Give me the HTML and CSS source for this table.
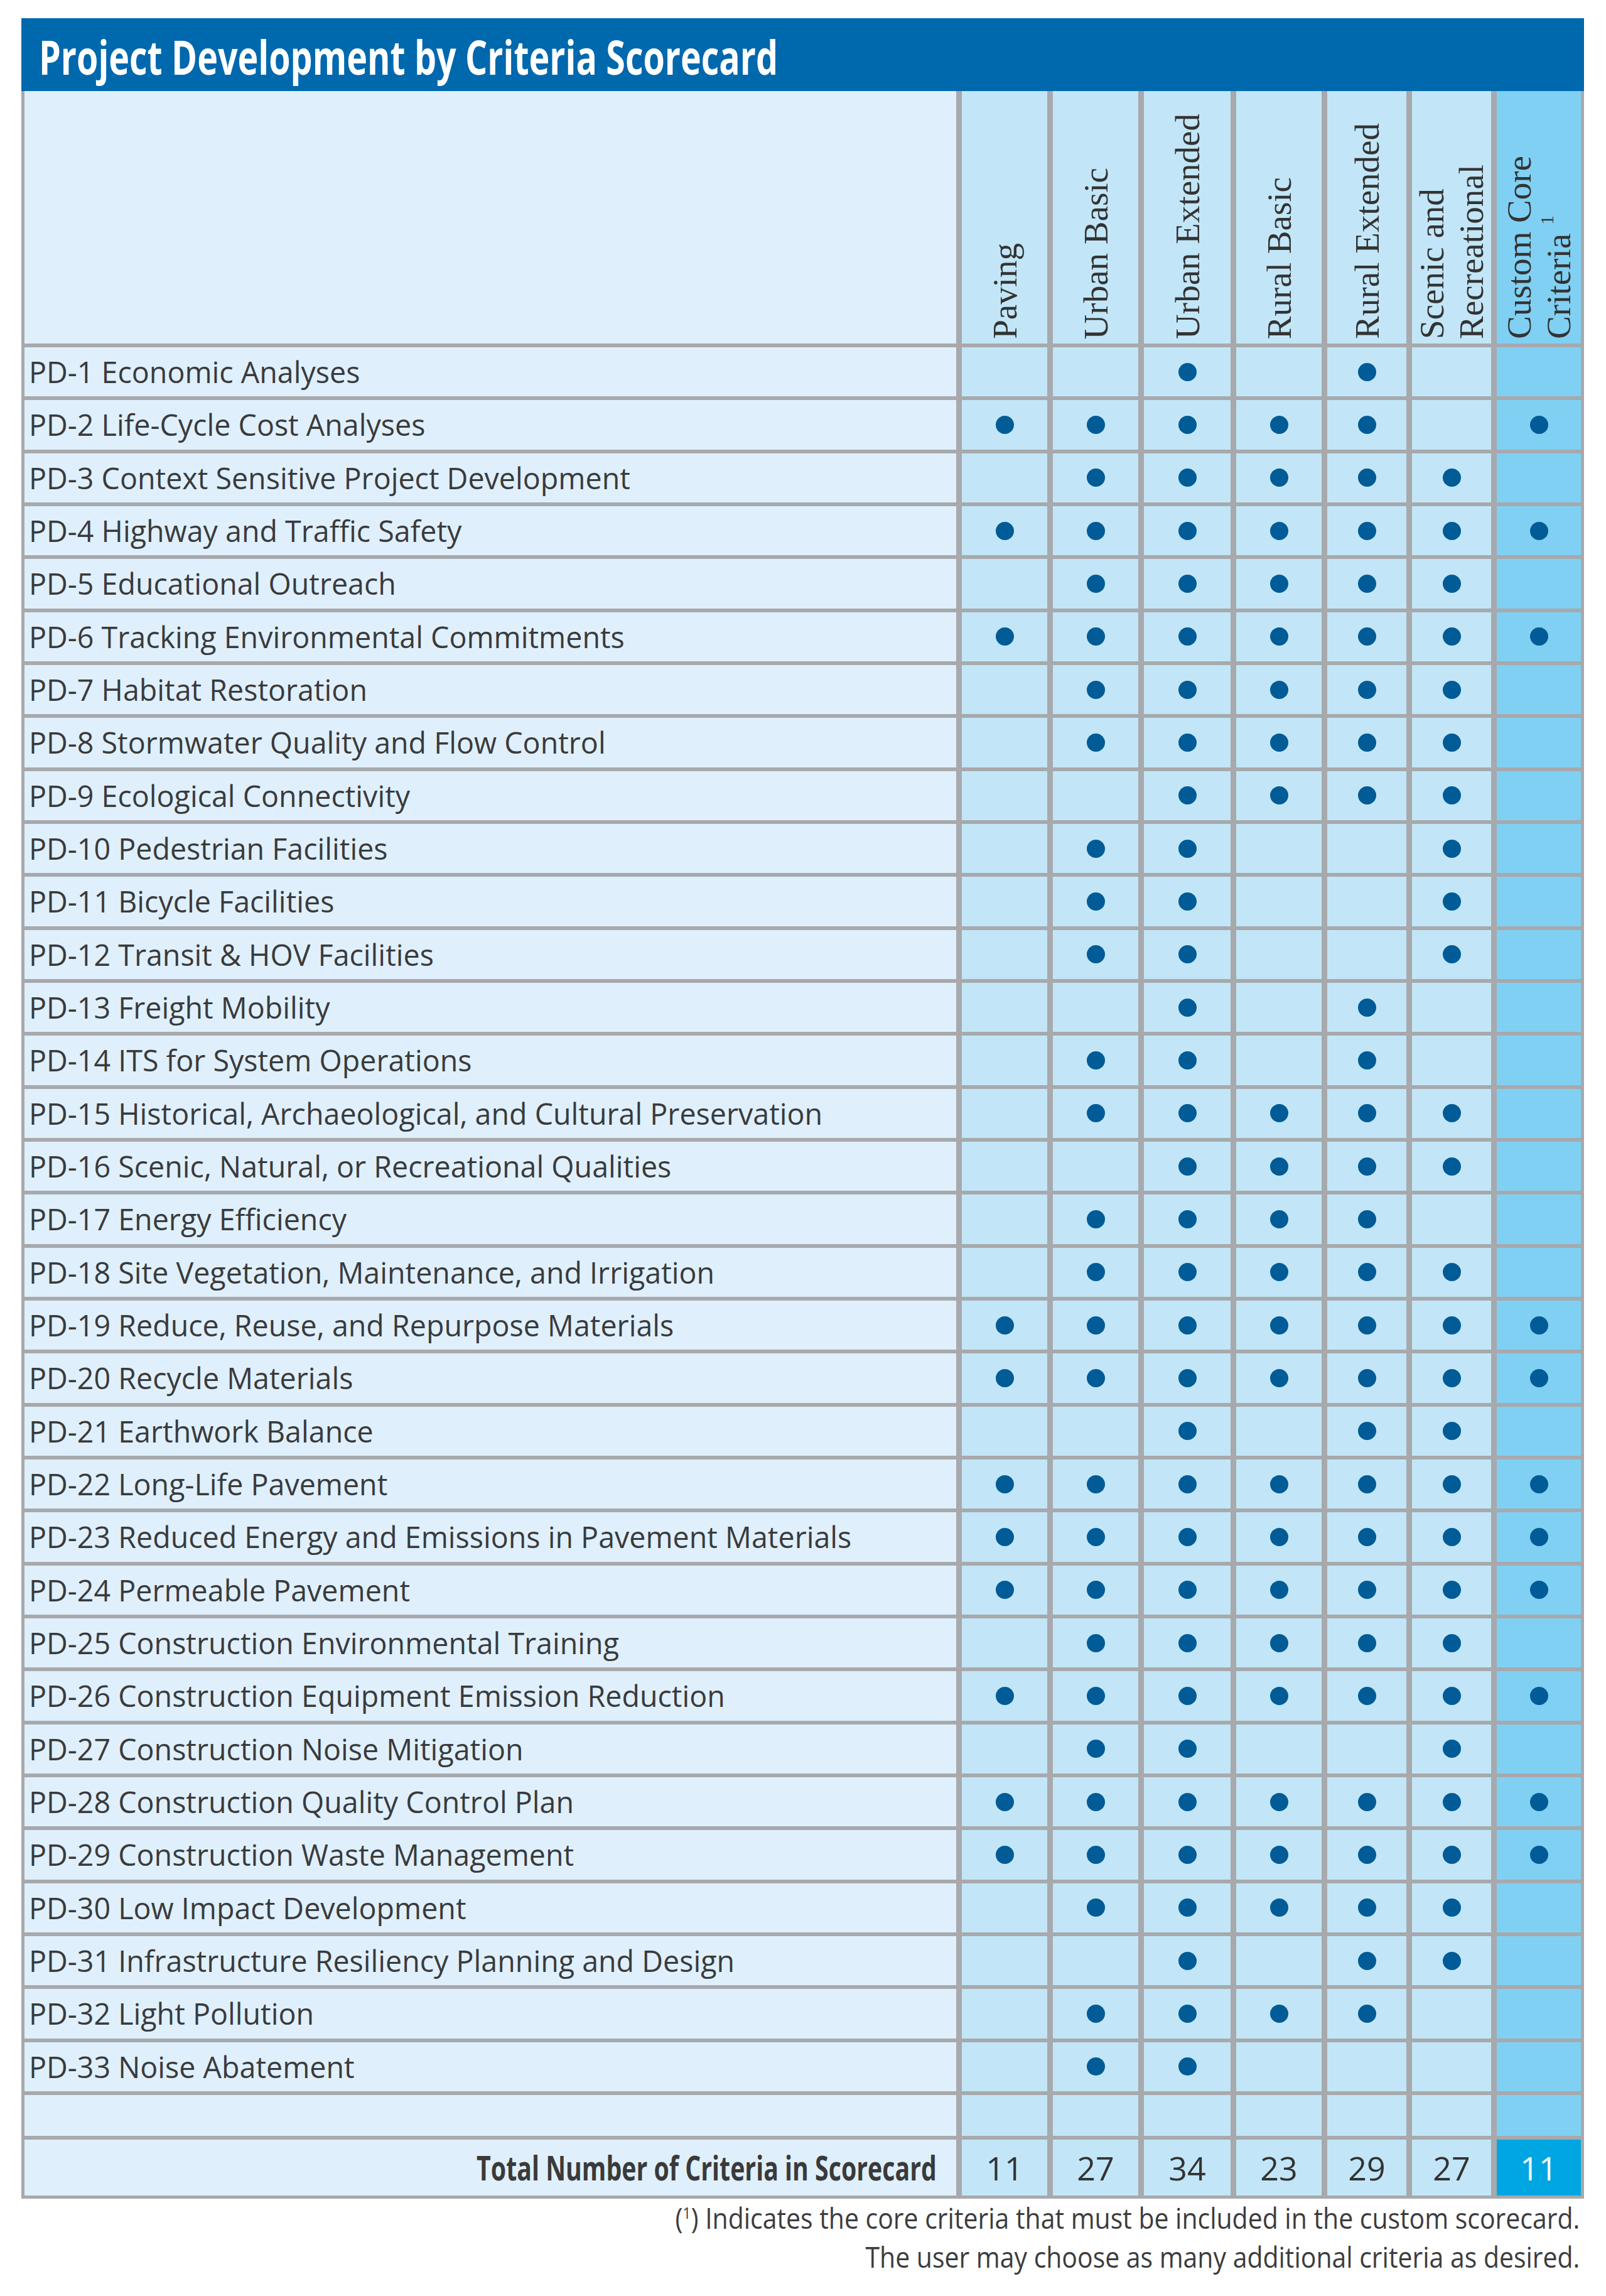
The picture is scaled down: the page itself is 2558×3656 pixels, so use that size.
FILE: index.html
```html
<!DOCTYPE html>
<html lang="en">
<head>
<meta charset="utf-8">
<title>Project Development by Criteria Scorecard</title>
<link rel="stylesheet" href="styles.css">
</head>
<body>
<div class="page">
  <div class="card">
    <div class="title"><span class="title-text">Project Development by Criteria Scorecard</span></div>
    <div class="grid">
      <div class="lbl"></div>
      <div class="c hc"><span class="vt">Paving</span></div>
      <div class="c hc"><span class="vt">Urban Basic</span></div>
      <div class="c hc"><span class="vt">Urban Extended</span></div>
      <div class="c hc"><span class="vt">Rural Basic</span></div>
      <div class="c hc"><span class="vt">Rural Extended</span></div>
      <div class="c hc"><span class="vt">Scenic and<br>Recreational</span></div>
      <div class="c core hc"><span class="vt">Custom Core<br>Criteria <sup class="sup">1</sup></span></div>

      <div class="lbl">PD-1 Economic Analyses</div>
      <div class="c"></div><div class="c"></div><div class="c"><span class="dot"></span></div><div class="c"></div><div class="c"><span class="dot"></span></div><div class="c"></div><div class="c core"></div>

      <div class="lbl">PD-2 Life-Cycle Cost Analyses</div>
      <div class="c"><span class="dot"></span></div><div class="c"><span class="dot"></span></div><div class="c"><span class="dot"></span></div><div class="c"><span class="dot"></span></div><div class="c"><span class="dot"></span></div><div class="c"></div><div class="c core"><span class="dot"></span></div>

      <div class="lbl">PD-3 Context Sensitive Project Development</div>
      <div class="c"></div><div class="c"><span class="dot"></span></div><div class="c"><span class="dot"></span></div><div class="c"><span class="dot"></span></div><div class="c"><span class="dot"></span></div><div class="c"><span class="dot"></span></div><div class="c core"></div>

      <div class="lbl">PD-4 Highway and Traffic Safety</div>
      <div class="c"><span class="dot"></span></div><div class="c"><span class="dot"></span></div><div class="c"><span class="dot"></span></div><div class="c"><span class="dot"></span></div><div class="c"><span class="dot"></span></div><div class="c"><span class="dot"></span></div><div class="c core"><span class="dot"></span></div>

      <div class="lbl">PD-5 Educational Outreach</div>
      <div class="c"></div><div class="c"><span class="dot"></span></div><div class="c"><span class="dot"></span></div><div class="c"><span class="dot"></span></div><div class="c"><span class="dot"></span></div><div class="c"><span class="dot"></span></div><div class="c core"></div>

      <div class="lbl">PD-6 Tracking Environmental Commitments</div>
      <div class="c"><span class="dot"></span></div><div class="c"><span class="dot"></span></div><div class="c"><span class="dot"></span></div><div class="c"><span class="dot"></span></div><div class="c"><span class="dot"></span></div><div class="c"><span class="dot"></span></div><div class="c core"><span class="dot"></span></div>

      <div class="lbl">PD-7 Habitat Restoration</div>
      <div class="c"></div><div class="c"><span class="dot"></span></div><div class="c"><span class="dot"></span></div><div class="c"><span class="dot"></span></div><div class="c"><span class="dot"></span></div><div class="c"><span class="dot"></span></div><div class="c core"></div>

      <div class="lbl">PD-8 Stormwater Quality and Flow Control</div>
      <div class="c"></div><div class="c"><span class="dot"></span></div><div class="c"><span class="dot"></span></div><div class="c"><span class="dot"></span></div><div class="c"><span class="dot"></span></div><div class="c"><span class="dot"></span></div><div class="c core"></div>

      <div class="lbl">PD-9 Ecological Connectivity</div>
      <div class="c"></div><div class="c"></div><div class="c"><span class="dot"></span></div><div class="c"><span class="dot"></span></div><div class="c"><span class="dot"></span></div><div class="c"><span class="dot"></span></div><div class="c core"></div>

      <div class="lbl">PD-10 Pedestrian Facilities</div>
      <div class="c"></div><div class="c"><span class="dot"></span></div><div class="c"><span class="dot"></span></div><div class="c"></div><div class="c"></div><div class="c"><span class="dot"></span></div><div class="c core"></div>

      <div class="lbl">PD-11 Bicycle Facilities</div>
      <div class="c"></div><div class="c"><span class="dot"></span></div><div class="c"><span class="dot"></span></div><div class="c"></div><div class="c"></div><div class="c"><span class="dot"></span></div><div class="c core"></div>

      <div class="lbl">PD-12 Transit &amp; HOV Facilities</div>
      <div class="c"></div><div class="c"><span class="dot"></span></div><div class="c"><span class="dot"></span></div><div class="c"></div><div class="c"></div><div class="c"><span class="dot"></span></div><div class="c core"></div>

      <div class="lbl">PD-13 Freight Mobility</div>
      <div class="c"></div><div class="c"></div><div class="c"><span class="dot"></span></div><div class="c"></div><div class="c"><span class="dot"></span></div><div class="c"></div><div class="c core"></div>

      <div class="lbl">PD-14 ITS for System Operations</div>
      <div class="c"></div><div class="c"><span class="dot"></span></div><div class="c"><span class="dot"></span></div><div class="c"></div><div class="c"><span class="dot"></span></div><div class="c"></div><div class="c core"></div>

      <div class="lbl">PD-15 Historical, Archaeological, and Cultural Preservation</div>
      <div class="c"></div><div class="c"><span class="dot"></span></div><div class="c"><span class="dot"></span></div><div class="c"><span class="dot"></span></div><div class="c"><span class="dot"></span></div><div class="c"><span class="dot"></span></div><div class="c core"></div>

      <div class="lbl">PD-16 Scenic, Natural, or Recreational Qualities</div>
      <div class="c"></div><div class="c"></div><div class="c"><span class="dot"></span></div><div class="c"><span class="dot"></span></div><div class="c"><span class="dot"></span></div><div class="c"><span class="dot"></span></div><div class="c core"></div>

      <div class="lbl">PD-17 Energy Efficiency</div>
      <div class="c"></div><div class="c"><span class="dot"></span></div><div class="c"><span class="dot"></span></div><div class="c"><span class="dot"></span></div><div class="c"><span class="dot"></span></div><div class="c"></div><div class="c core"></div>

      <div class="lbl">PD-18 Site Vegetation, Maintenance, and Irrigation</div>
      <div class="c"></div><div class="c"><span class="dot"></span></div><div class="c"><span class="dot"></span></div><div class="c"><span class="dot"></span></div><div class="c"><span class="dot"></span></div><div class="c"><span class="dot"></span></div><div class="c core"></div>

      <div class="lbl">PD-19 Reduce, Reuse, and Repurpose Materials</div>
      <div class="c"><span class="dot"></span></div><div class="c"><span class="dot"></span></div><div class="c"><span class="dot"></span></div><div class="c"><span class="dot"></span></div><div class="c"><span class="dot"></span></div><div class="c"><span class="dot"></span></div><div class="c core"><span class="dot"></span></div>

      <div class="lbl">PD-20 Recycle Materials</div>
      <div class="c"><span class="dot"></span></div><div class="c"><span class="dot"></span></div><div class="c"><span class="dot"></span></div><div class="c"><span class="dot"></span></div><div class="c"><span class="dot"></span></div><div class="c"><span class="dot"></span></div><div class="c core"><span class="dot"></span></div>

      <div class="lbl">PD-21 Earthwork Balance</div>
      <div class="c"></div><div class="c"></div><div class="c"><span class="dot"></span></div><div class="c"></div><div class="c"><span class="dot"></span></div><div class="c"><span class="dot"></span></div><div class="c core"></div>

      <div class="lbl">PD-22 Long-Life Pavement</div>
      <div class="c"><span class="dot"></span></div><div class="c"><span class="dot"></span></div><div class="c"><span class="dot"></span></div><div class="c"><span class="dot"></span></div><div class="c"><span class="dot"></span></div><div class="c"><span class="dot"></span></div><div class="c core"><span class="dot"></span></div>

      <div class="lbl">PD-23 Reduced Energy and Emissions in Pavement Materials</div>
      <div class="c"><span class="dot"></span></div><div class="c"><span class="dot"></span></div><div class="c"><span class="dot"></span></div><div class="c"><span class="dot"></span></div><div class="c"><span class="dot"></span></div><div class="c"><span class="dot"></span></div><div class="c core"><span class="dot"></span></div>

      <div class="lbl">PD-24 Permeable Pavement</div>
      <div class="c"><span class="dot"></span></div><div class="c"><span class="dot"></span></div><div class="c"><span class="dot"></span></div><div class="c"><span class="dot"></span></div><div class="c"><span class="dot"></span></div><div class="c"><span class="dot"></span></div><div class="c core"><span class="dot"></span></div>

      <div class="lbl">PD-25 Construction Environmental Training</div>
      <div class="c"></div><div class="c"><span class="dot"></span></div><div class="c"><span class="dot"></span></div><div class="c"><span class="dot"></span></div><div class="c"><span class="dot"></span></div><div class="c"><span class="dot"></span></div><div class="c core"></div>

      <div class="lbl">PD-26 Construction Equipment Emission Reduction</div>
      <div class="c"><span class="dot"></span></div><div class="c"><span class="dot"></span></div><div class="c"><span class="dot"></span></div><div class="c"><span class="dot"></span></div><div class="c"><span class="dot"></span></div><div class="c"><span class="dot"></span></div><div class="c core"><span class="dot"></span></div>

      <div class="lbl">PD-27 Construction Noise Mitigation</div>
      <div class="c"></div><div class="c"><span class="dot"></span></div><div class="c"><span class="dot"></span></div><div class="c"></div><div class="c"></div><div class="c"><span class="dot"></span></div><div class="c core"></div>

      <div class="lbl">PD-28 Construction Quality Control Plan</div>
      <div class="c"><span class="dot"></span></div><div class="c"><span class="dot"></span></div><div class="c"><span class="dot"></span></div><div class="c"><span class="dot"></span></div><div class="c"><span class="dot"></span></div><div class="c"><span class="dot"></span></div><div class="c core"><span class="dot"></span></div>

      <div class="lbl">PD-29 Construction Waste Management</div>
      <div class="c"><span class="dot"></span></div><div class="c"><span class="dot"></span></div><div class="c"><span class="dot"></span></div><div class="c"><span class="dot"></span></div><div class="c"><span class="dot"></span></div><div class="c"><span class="dot"></span></div><div class="c core"><span class="dot"></span></div>

      <div class="lbl">PD-30 Low Impact Development</div>
      <div class="c"></div><div class="c"><span class="dot"></span></div><div class="c"><span class="dot"></span></div><div class="c"><span class="dot"></span></div><div class="c"><span class="dot"></span></div><div class="c"><span class="dot"></span></div><div class="c core"></div>

      <div class="lbl">PD-31 Infrastructure Resiliency Planning and Design</div>
      <div class="c"></div><div class="c"></div><div class="c"><span class="dot"></span></div><div class="c"></div><div class="c"><span class="dot"></span></div><div class="c"><span class="dot"></span></div><div class="c core"></div>

      <div class="lbl">PD-32 Light Pollution</div>
      <div class="c"></div><div class="c"><span class="dot"></span></div><div class="c"><span class="dot"></span></div><div class="c"><span class="dot"></span></div><div class="c"><span class="dot"></span></div><div class="c"></div><div class="c core"></div>

      <div class="lbl">PD-33 Noise Abatement</div>
      <div class="c"></div><div class="c"><span class="dot"></span></div><div class="c"><span class="dot"></span></div><div class="c"></div><div class="c"></div><div class="c"></div><div class="c core"></div>

      <div class="lbl"></div>
      <div class="c"></div><div class="c"></div><div class="c"></div><div class="c"></div><div class="c"></div><div class="c"></div><div class="c core"></div>

      <div class="lbl total-lbl"><span class="total-text">Total Number of Criteria in Scorecard</span></div>
      <div class="c num">11</div><div class="c num">27</div><div class="c num">34</div><div class="c num">23</div><div class="c num">29</div><div class="c num">27</div><div class="c num core-total">11</div>
    </div>
    <div class="note">
      <div class="note-line"><span>(<sup class="sup">1</sup>) Indicates the core criteria that must be included in the custom scorecard.</span></div>
      <div class="note-line"><span>The user may choose as many additional criteria as desired.</span></div>
    </div>
  </div>
</div>
</body>
</html>
```

FILE: styles.css
```css
* { box-sizing: border-box; }

body {
  margin: 0;
  background: #ffffff;
  font-family: "Open Sans", "Noto Sans", sans-serif;
  color: #3c3c3e;
}

.page {
  padding: 29px 0 0 34px;
}

.card {
  width: 2489px;
}

.title {
  height: 116px;
  background: #0068ad;
  color: #ffffff;
  display: flex;
  align-items: center;
  padding: 6px 0 0 28px;
}

.title-text {
  display: inline-block;
  font-weight: 700;
  font-size: 76px;
  line-height: 1;
  white-space: nowrap;
  transform: scaleX(0.73);
  transform-origin: left center;
}

.grid {
  display: grid;
  grid-template-columns: 1484px 136px 136px 138px 136px 126px 126px 134px;
  grid-template-rows: 402px repeat(33, 78.33px) 65px 89px;
  column-gap: 9px;
  row-gap: 6px;
  background: #a7a9ac;
  padding: 0 5px 5px 5px;
}

.lbl {
  background: #dff0fc;
  display: flex;
  align-items: center;
  padding-left: 7px;
  font-size: 46.6px;
  white-space: nowrap;
  color: #3a3a3c;
}

.c {
  background: #c2e6f7;
  display: flex;
  align-items: center;
  justify-content: center;
}

.c.core {
  background: #80d0f3;
}

.dot {
  width: 29px;
  height: 29px;
  border-radius: 50%;
  background: #005b96;
}

.hc {
  align-items: flex-end;
  padding-bottom: 7px;
}

.vt {
  writing-mode: vertical-rl;
  transform: rotate(180deg);
  font-family: "Liberation Serif", "Times New Roman", serif;
  font-size: 55px;
  line-height: 63px;
  color: #333333;
  white-space: nowrap;
}

.sup {
  font-size: 0.55em;
  line-height: 0;
  vertical-align: super;
}

.total-lbl {
  justify-content: flex-end;
  padding-right: 31px;
}

.total-text {
  display: inline-block;
  font-weight: 700;
  font-size: 53px;
  white-space: nowrap;
  transform: scaleX(0.741);
  transform-origin: right center;
  color: #3a3a3a;
}

.num {
  font-size: 52px;
  color: #333333;
}

.c.core-total {
  background: #00a6e1;
  color: #ffffff;
}

.note {
  text-align: right;
  padding-right: 7px;
  font-size: 45px;
  line-height: 62px;
  color: #3c3c3e;
}

.note-line span {
  display: inline-block;
  white-space: nowrap;
  transform: scaleX(0.91);
  transform-origin: right center;
}
```
